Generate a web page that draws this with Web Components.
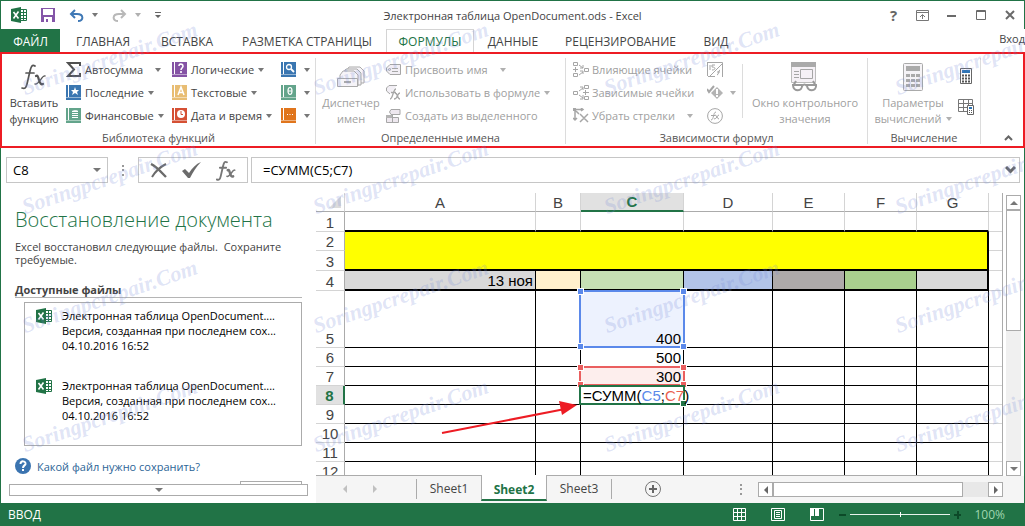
<!DOCTYPE html>
<html lang="ru">
<head>
<meta charset="utf-8">
<title>Электронная таблица OpenDocument.ods - Excel</title>
<style>
html, body { margin: 0; height: 100%; }
body { font-family: "Open Sans", "Noto Sans", sans-serif; font-size: 12px; color: #444; background: #fff; }
</style>
</head>
<body>
<xl-app></xl-app>
<script>
const base = `*,*::before,*::after{box-sizing:border-box}
button,input{font:inherit;color:inherit;background:none;border:0;padding:0;margin:0}
button{cursor:pointer;white-space:nowrap}`;

function define(name, css, html) {
  customElements.define(name, class extends HTMLElement {
    connectedCallback() {
      if (this.shadowRoot) return;
      const root = this.attachShadow({ mode: 'open' });
      const t = document.createElement('template');
      t.innerHTML = `<style>${base}${css}</style>` + (typeof html === 'function' ? html(this) : html);
      root.append(document.importNode(t.content, true));
    }
  });
}

const book = (c, inner) => `<path fill="${c}" d="M0 0h2v12H0zM3 0h12v12H3zM0 13h15v2H0z"/><path fill="${c}" opacity=".55" d="M0 12h15v1H0z"/>${inner}`;
const G = 'fill="none" stroke="#a6a6a6"';
const fx = (c, s) => `<g fill="none" stroke="${c}" stroke-linecap="round"><path stroke-width="${s}" d="M14 3c-3-2-4 1-5 5L6 21c-1 4-2 5-5 4M5 10h8"/><path stroke-width="${s * 1.3}" d="M15 13c2-1 2 1 3 4s2 5 4 4"/><path stroke-width="${s * .8}" d="M24 13c-3-1-6 9-10 8"/></g>`;
const icons = {
  excel: [16, 16, `<path fill="#fff" stroke="#217346" d="M8 2.500h7.500v11H8z"/><path stroke="#217346" d="M8 5.500h7M8 8.500h7M8 11.500h7M12.500 3v10"/><path fill="#217346" d="M0 2l10-2v16L0 14z"/><path stroke="#fff" stroke-width="1.600" d="M2.500 5l5 6.500M7.500 4.500l-5 7"/>`],
  save: [14, 14, `<path fill="#8455a8" fill-rule="evenodd" d="M0 0h14v14H0zM2 1v6h10V1zM3 9v5h8V9z"/><path fill="#8455a8" d="M5 11h2v3H5z"/>`],
  undo: [15, 13, `<path fill="none" stroke="#3f78b5" stroke-width="2" d="M6 1L2 5l4 4M2 5h6c7 0 7 7 1 7"/>`],
  redo: [15, 13, `<path fill="none" stroke="#b8b8b8" stroke-width="2" d="M9 1l4 4-4 4M13 5H7C0 5 0 12 6 12"/>`],
  down: [6, 4, `<path fill="#777" d="M0 0h6L3 4z"/>`],
  downg: [6, 4, `<path fill="#b0b0b0" d="M0 0h6L3 4z"/>`],
  custom: [6, 6, `<path fill="#666" d="M0 0h6v1H0zM0 3h6L3 6z"/>`],
  disp: [13, 11, `<path fill="none" stroke="#777" d="M.5.5h12v10H.5zM0 2.500h13M6.500 9V5M4 7l2.500-2.500L9 7"/>`],
  min: [10, 10, `<path fill="#6a6a6a" d="M0 5h9v2H0z"/>`],
  max: [10, 10, `<path fill="none" stroke="#6a6a6a" d="M.5.5h9v9h-9zM0 1.500h10"/>`],
  close: [10, 10, `<path fill="none" stroke="#6a6a6a" stroke-width="2" d="M1 1l8 8M9 1L1 9"/>`],
  fxbig: [26, 28, fx('#555', 1.7)],
  fxbar: [20, 21, `<g transform="scale(.78)">${fx('#777', 2.4)}</g>`],
  sigma: [15, 15, `<path fill="none" stroke="#505050" stroke-width="2" d="M14 4V1H2l6 6.500L2 14h12v-3"/>`],
  star: [15, 15, book('#3a76b1', `<path fill="#fff" d="M9 2l1 3h3l-2 2 1 3-3-2-3 2 1-3-2-2h3z"/>`)],
  money: [15, 15, book('#63a48b', `<path fill="#fff" d="M6 3c1-1 6-1 6 0v1H6zM6 5h6v1H6zM6 7h6v1H6zM6 9h6v1H6z"/>`)],
  logic: [15, 15, book('#8553a5', `<path fill="none" stroke="#fff" stroke-width="1.600" d="M7 4c0-3 4-2 4 0S9 6 9 8M9 9v2"/>`)],
  text: [15, 15, book('#e8bd73', `<path fill="none" stroke="#fff" stroke-width="1.500" d="M6 10l3-8 3 8M7 7.500h4"/>`)],
  clock: [15, 15, book('#d55034', `<circle cx="9" cy="6" r="4" fill="#fff"/><path fill="none" stroke="#d55034" d="M9 3v3.500h2"/>`)],
  look: [15, 15, book('#3a76b1', `<circle cx="8" cy="5" r="2.500" fill="none" stroke="#fff" stroke-width="1.300"/><path stroke="#fff" stroke-width="1.800" d="M10 7l3 3"/>`)],
  theta: [15, 15, book('#63a48b', `<ellipse cx="9" cy="6" rx="2" ry="3.500" fill="none" stroke="#fff" stroke-width="1.200"/><path stroke="#fff" d="M7 6h4"/>`)],
  more: [15, 15, book('#e0751c', `<path fill="#fff" d="M6 6h1v1H6zM8.500 6h1v1h-1zM11 6h1v1h-1z"/>`)],
  names: [28, 22, `<g fill="#f6f4f8" stroke="#aaa"><path d="M9 10V5l3-4h11l4 4v12H9z"/><path d="M6 12V7l3-4h11l4 4v12H6z"/><path d="M3 12V9l3-4h11l4 4v11H3z"/><path d="M.5 12.500h20v8H.5z"/></g><path fill="#aaa" d="M7 15h7v2H7z"/>`],
  tag: [15, 12, `<path fill="#f2eff5" stroke="#a6a6a6" d="M4 .5h10.500v10H4L.5 7V4z"/><path ${G} d="M6 4.500h6M6 7.500h6"/><circle cx="3.500" cy="5.500" r="1" ${G}/>`],
  tagfx: [15, 15, `<path fill="#f2eff5" stroke="#a6a6a6" d="M11 .5H3L.5 3v3L4 9"/><path ${G} stroke-width="1.300" d="M4 14c3 0 3-10 6-10M5 7.500h5M9 8c3 0 2 6 5 6M14 8c-3 0-2 6-6 6"/>`],
  create: [15, 14, `<path fill="#eee8ef" stroke="#a6a6a6" d="M5 .5h9v5H5L3.500 3zM.5 8.500h12v5H.5zM6.500 6v8"/><path fill="#b4b4b4" d="M0 6h6v3H0z"/>`],
  prec: [16, 16, `<path ${G} d="M.5.5h4v3h-4zM.5 11.500h4v3h-4zM11.500 6.500h4v3h-4zM0 7.500h5M2.500 5v5M6 3l4 3M10 3v3H7M6 13l4-3M7 9h3v3"/>`],
  dep: [16, 16, `<path ${G} d="M.5 6.500h4v3h-4zM11.500.5h4v3h-4zM11.500 11.500h4v3h-4zM10 7.500h6M12.500 5v5M6 6l4-3M7 2h3v3M6 10l4 3M10 10v4H7"/>`],
  remove: [16, 15, `<path fill="#a6a6a6" d="M0 0h3v3H0z"/><path ${G} stroke-width="1.500" d="M2 1.500h8M8 0l2 1.500L8 3M2 3v9M0 10l2 2 2-2M3 3l3 3M7 6l8 8M15 6l-8 8"/>`],
  show: [16, 16, `<path ${G} d="M0 .5h15.500V15M.5 1v13M1 14.500h7M3 14L15 2M3 3v5M8 3H5v2c4 0 4 3 0 3M13 8c-2 0-1 5-3 5M10 10h3"/>`],
  err: [16, 15, `<path fill="#b4b4b4" d="M10 2l6 6-6 6-6-6z"/><path fill="#fff" d="M9 4h2v5H9zM9 10h2v2H9z"/><path ${G} stroke-width="2" d="M0 4l2 3 5-6"/>`],
  eval: [16, 16, `<circle cx="8" cy="8" r="7.400" ${G}/><path ${G} d="M4 12c3 0 2-8 5-8M4 7.500h4M8 7c2 0 2 4 4 4M12 7c-2 0-2 4-5 4"/>`],
  watch: [28, 30, `<path fill="#f5f1f6" stroke="#bcbcbc" d="M.5.5h24v20H.5z"/><path fill="#aaa" d="M0 0h25v5H0z"/><path ${G} d="M3 9.500h5M3 12.500h5M3 15.500h5M9.500 7.500h12v9h-12z"/><path fill="#fff" stroke="#999" stroke-width="2" d="M2 23h9c1 7-9 7-9 0zM16 23h9c1 7-9 7-9 0z"/><path fill="none" stroke="#999" stroke-width="2" d="M11 24c2-2 3-2 5 0M2 24l3-5M25 24l-3-5"/>`],
  calc: [20, 28, `<rect x=".5" y=".5" width="19" height="27" rx="1" fill="#f5f3f6" stroke="#aaa"/><path fill="#aaa" d="M3 3h14v5H3z"/><path stroke="#aaa" stroke-width="3" stroke-dasharray="4 1" d="M3 12.500h14M3 17.500h14M3 22.500h14"/>`],
  calcnow: [12, 16, `<path fill="#fff" stroke="#666" d="M.5.5h11v15H.5z"/><path fill="#2f75b5" d="M2 2h8v3H2z"/><path stroke="#555" stroke-width="2" stroke-dasharray="2 1" d="M2 7.500h8M2 10.500h8M2 13.500h8"/>`],
  calcsheet: [16, 16, `<path fill="none" stroke="#777" d="M.5.5h14v12H.5zM0 4.500h15M0 8.500h15M5.500 0v13M10.500 0v13"/><path fill="#fff" stroke="#666" d="M9.500 6.500h6v9h-6z"/><path fill="#2f75b5" d="M11 8h3v2h-3z"/><path stroke="#555" stroke-dasharray="1 1" d="M11 11.500h3M11 13.500h3"/>`],
  up: [9, 6, `<path fill="none" stroke="#666" stroke-width="2" d="M1 5l3.500-3.500L8 5"/>`],
  chev: [11, 8, `<path fill="none" stroke="#666" stroke-width="3" d="M1 1l4.500 4.500L10 1"/>`],
  x: [17, 15, `<path fill="none" stroke="#6b6b6b" stroke-width="2.400" d="M1 1c6 3 10 8 15 13"/><path fill="none" stroke="#6b6b6b" stroke-width="2" d="M16 1C10 4 5 9 2 14"/>`],
  check: [19, 16, `<path fill="#6b6b6b" d="M0 9l3-2 4 4C10 6 14 2 19 0 14 5 11 10 8 16H6z"/>`],
  dots: [2, 11, `<path fill="#999" d="M0 0h2v2H0zM0 4h2v2H0zM0 9h2v2H0z"/>`],
  help: [16, 16, `<circle cx="8" cy="8" r="8" fill="#3b74b0"/><path fill="none" stroke="#fff" stroke-width="2" d="M5.500 6c0-4 5.500-3 5 0-.3 1.500-2.500 1.500-2.500 4M8 11v2"/>`],
  left: [4, 8, `<path fill="currentColor" d="M4 0v8L0 4z"/>`],
  right: [4, 8, `<path fill="currentColor" d="M0 0v8l4-4z"/>`],
  tup: [8, 4, `<path fill="#777" d="M0 4h8L4 0z"/>`],
  tdown: [8, 4, `<path fill="#777" d="M0 0h8L4 4z"/>`],
  add: [16, 16, `<circle cx="8" cy="8" r="7.500" fill="none" stroke="#777"/><path stroke="#666" stroke-width="2" d="M4 8h8M8 4v8"/>`],
  corner: [12, 12, `<path fill="#dcdcdc" d="M12 0v12H0z"/>`],
  normal: [13, 13, `<path fill="none" stroke="#fff" d="M.5.5h12v12H.5zM0 4.500h13M0 8.500h13M4.500 0v13M8.500 0v13"/>`],
  layout: [14, 13, `<path fill="none" stroke="#fff" d="M.5.5h13v12H.5zM3.500 2.500h7v8h-7zM5 4.500h4M5 6.500h4M5 8.500h4"/>`],
  breaks: [14, 13, `<path fill="none" stroke="#fff" d="M.5.5h13v12H.5z"/><path fill="#fff" d="M0 0h4v8H0zM5 0h4v8H5z"/>`]
};

define('xl-icon', ':host{display:inline-block;flex:none;line-height:0}svg{display:block}', el => {
  const [w, h, body] = icons[el.getAttribute('name')];
  return `<svg width="${w}" height="${h}" viewBox="0 0 ${w} ${h}" aria-hidden="true">${body}</svg>`;
});

define('xl-titlebar', `
:host{display:grid;grid-template-columns:1fr auto 1fr;align-items:center;height:28px;font-size:11px}
.q{display:flex;align-items:center;padding-left:10px}
.q button{display:flex;align-items:center;gap:8px;margin-left:14px}
.w{display:flex;justify-content:flex-end}
.w button{width:29px;height:20px;display:flex;align-items:center;justify-content:center;font-size:15px;font-weight:700;color:#666}`, `
<div class="q"><xl-icon name="excel"></xl-icon>
<button aria-label="Сохранить"><xl-icon name="save"></xl-icon></button>
<button aria-label="Отменить"><xl-icon name="undo"></xl-icon><xl-icon name="down"></xl-icon></button>
<button aria-label="Вернуть"><xl-icon name="redo"></xl-icon><xl-icon name="downg"></xl-icon></button>
<button aria-label="Настройка панели"><xl-icon name="custom"></xl-icon></button></div>
<div>Электронная таблица OpenDocument.ods - Excel</div>
<div class="w"><button>?</button><button aria-label="Лента"><xl-icon name="disp"></xl-icon></button><button aria-label="Свернуть"><xl-icon name="min"></xl-icon></button><button aria-label="Развернуть"><xl-icon name="max"></xl-icon></button><button aria-label="Закрыть"><xl-icon name="close"></xl-icon></button></div>`);

define('xl-tabs', `
:host{display:flex;height:23px;justify-content:space-between;overflow:hidden;border-left:1px solid #217346}
nav{display:grid;grid-template-columns:59px 86px 82px 158px 88px 78px 137px 54px}
button{text-align:center;line-height:24px}
.file{background:#217346;color:#fff}
.on{color:#217346;border:1px solid #d4d4d4;border-bottom:0}
.in{line-height:20px;align-self:start;font-size:11px}`, `
<nav><button class="file">ФАЙЛ</button><button>ГЛАВНАЯ</button><button>ВСТАВКА</button><button>РАЗМЕТКА СТРАНИЦЫ</button><button class="on">ФОРМУЛЫ</button><button>ДАННЫЕ</button><button>РЕЦЕНЗИРОВАНИЕ</button><button>ВИД</button></nav>
<button class="in">Вход</button>`);

define('xl-group', `
:host{display:flex;flex-direction:column;flex:none;border-right:1px solid #dcdcdc;height:86px}
.c{display:flex;flex:1}
.l{text-align:center;line-height:12px;height:12px;color:#555}`, el => `
<div class="c"><slot></slot></div><div class="l">${el.getAttribute('label')}</div>`);

define('xl-big', `
:host{display:block;flex:none}
:host([off]){color:#a0a0a0}
button{display:flex;flex-direction:column;align-items:center;width:100%;line-height:16px}
.i{height:37px;display:flex;align-items:center}
.r{display:flex;align-items:center;gap:4px}`, el => `
<button><span class="i"><xl-icon name="${el.getAttribute('icon')}"></xl-icon></span><span>${el.getAttribute('top')}</span><span class="r">${el.getAttribute('bottom')}${el.hasAttribute('menu') ? '<xl-icon name="downg"></xl-icon>' : ''}</span></button>`);

define('xl-cmd', `
:host{display:block}
:host([off]){color:#a0a0a0}
button{display:flex;align-items:center;height:23px}
.i{width:15px;display:flex;justify-content:center;margin-right:4px}
.d{margin-left:4px}
.far{margin-left:12px}`, el => `
<button ${el.hasAttribute('label') ? '' : 'aria-label="Команда"'}><span class="i"><xl-icon name="${el.getAttribute('icon')}"></xl-icon></span>${el.getAttribute('label') || ''}${el.hasAttribute('menu') ? `<xl-icon class="${el.getAttribute('menu') === 'far' ? 'far' : 'd'}" name="${el.hasAttribute('off') ? 'downg' : 'down'}"></xl-icon>` : ''}</button>`);

define('xl-ribbon', `
:host{display:flex;border:2px solid #ed1c24;height:96px;padding-top:4px;font-size:11px}
xl-group:nth-of-type(1){width:314px}
xl-group:nth-of-type(2){width:250px}
xl-group:nth-of-type(3){width:302px}
xl-group:nth-of-type(4){width:113px}
.a{width:64px}.b{width:106px}.n{width:109px}
.m{width:70px}.t{width:134px}.w{width:124px}.p{width:90px}
.sep{width:1px;height:54px;margin:6px 0 0 6px;background:#dcdcdc}
.pad{padding-left:7px}
.calc{padding-top:6px;display:flex;flex-direction:column;gap:8px}
.up{margin:auto 0 0 auto;width:30px;height:16px;display:flex;justify-content:center;align-items:center}`, `
<xl-group label="Библиотека функций">
<xl-big class="a" icon="fxbig" top="Вставить" bottom="функцию"></xl-big>
<div class="b"><xl-cmd icon="sigma" label="Автосумма" menu="far"></xl-cmd><xl-cmd icon="star" label="Последние" menu></xl-cmd><xl-cmd icon="money" label="Финансовые" menu></xl-cmd></div>
<div class="n"><xl-cmd icon="logic" label="Логические" menu></xl-cmd><xl-cmd icon="text" label="Текстовые" menu></xl-cmd><xl-cmd icon="clock" label="Дата и время" menu></xl-cmd></div>
<div><xl-cmd icon="look" menu></xl-cmd><xl-cmd icon="theta" menu></xl-cmd><xl-cmd icon="more" menu></xl-cmd></div>
</xl-group>
<xl-group label="Определенные имена">
<xl-big class="m" off icon="names" top="Диспетчер" bottom="имен"></xl-big>
<div><xl-cmd off icon="tag" label="Присвоить имя" menu="far"></xl-cmd><xl-cmd off icon="tagfx" label="Использовать в формуле" menu></xl-cmd><xl-cmd off icon="create" label="Создать из выделенного"></xl-cmd></div>
</xl-group>
<xl-group label="Зависимости формул">
<div class="pad t"><xl-cmd off icon="prec" label="Влияющие ячейки"></xl-cmd><xl-cmd off icon="dep" label="Зависимые ячейки"></xl-cmd><xl-cmd off icon="remove" label="Убрать стрелки" menu="far"></xl-cmd></div>
<div class="pad"><xl-cmd off icon="show"></xl-cmd><xl-cmd off icon="err" menu></xl-cmd><xl-cmd off icon="eval"></xl-cmd></div>
<div class="sep"></div>
<xl-big class="w" off icon="watch" top="Окно контрольного" bottom="значения"></xl-big>
</xl-group>
<xl-group label="Вычисление">
<xl-big class="p" off icon="calc" top="Параметры" bottom="вычислений" menu></xl-big>
<div class="calc"><xl-cmd icon="calcnow"></xl-cmd><xl-cmd icon="calcsheet"></xl-cmd></div>
</xl-group>
<button class="up" aria-label="Свернуть ленту"><xl-icon name="up"></xl-icon></button>`);

define('xl-formula-bar', `
:host{display:flex;align-items:center;padding:9px 4px 10px 5px;height:45px;color:#000;font-size:13px}
.box{border:1px solid #c6c6c6;height:26px;display:flex;align-items:center}
.name{width:102px;padding:0 6px}
.name input{width:70px;flex:1}
.dots{margin:0 14px}
.act{width:110px;justify-content:space-around;margin-right:3px;padding:0 4px}
.f{flex:1;padding:0 3px 0 11px}
.f input{flex:1}
.act button{display:flex}`, `
<div class="box name"><input aria-label="Имя" value="C8"><xl-icon name="tdown"></xl-icon></div>
<xl-icon class="dots" name="dots"></xl-icon>
<div class="box act"><button aria-label="Отмена"><xl-icon name="x"></xl-icon></button><button aria-label="Ввод"><xl-icon name="check"></xl-icon></button><button aria-label="Вставить функцию"><xl-icon name="fxbar"></xl-icon></button></div>
<div class="box f"><input aria-label="Строка формул" value="=СУММ(C5;C7)"><xl-icon name="chev"></xl-icon></div>`);

define('xl-file', `
:host{display:flex;gap:10px;height:70px;color:#000;line-height:15px;font-size:11px}
div{min-width:0;white-space:nowrap}`, `
<xl-icon name="excel"></xl-icon><div><slot></slot></div>`);

define('xl-recovery', `
:host{display:flex;flex-direction:column;width:315px;flex:none;overflow:hidden;padding:12px 8px 7px}
.in{flex:1;min-height:0;overflow:hidden;padding:0 6px}
h1{margin:0;font-weight:300;font-size:20px;line-height:30px;color:#217346;white-space:nowrap}
p{margin:5px 0 0;font-size:11px;line-height:13px}
h2{margin:17px 0 0;font-size:11px;line-height:14px;border-bottom:1px solid #b5b5b5}
.list{margin:4px 0 0 9px;border:1px solid #ababab;height:144px;padding:5px 0 0 11px}
.help{display:flex;align-items:center;gap:6px;margin-top:12px;color:#2b6496;font-size:11px;text-decoration:none}
.close{display:block;width:62px;height:24px;border:1px solid #ababab;margin:7px 0 0 auto}
.more{height:12px;border:1px solid #ababab;display:flex;align-items:center;justify-content:center;flex:none}`, `
<div class="in"><h1>Восстановление документа</h1>
<p>Excel восстановил следующие файлы.&nbsp; Сохраните<br>требуемые.</p>
<h2>Доступные файлы</h2>
<div class="list">
<xl-file>Электронная таблица OpenDocument....<br>Версия, созданная при последнем сох...<br>04.10.2016 16:52</xl-file>
<xl-file>Электронная таблица OpenDocument....<br>Версия, созданная при последнем сох...<br>04.10.2016 16:52</xl-file></div>
<a class="help" href="#help"><xl-icon name="help"></xl-icon>Какой файл нужно сохранить?</a>
<button class="close" aria-label="Закрыть"></button></div>
<button class="more" aria-label="Далее"><xl-icon name="tdown"></xl-icon></button>`);

const blankRow = n => `<tr><th scope="row">${n}</th>${'<td></td>'.repeat(7)}<td class="z"></td></tr>`;
define('xl-grid', `
:host{display:block;flex:1;min-height:0;overflow:hidden;position:relative;border-right:1px solid #ababab;border-bottom:1px solid #ababab;font:15px "Liberation Sans",Arial,sans-serif;color:#000}
table{border-collapse:separate;border-spacing:0;table-layout:fixed;width:687px}
th{font-weight:400;color:#444}
td,th{padding:0 2px 0 0;line-height:17px;height:19px;vertical-align:bottom;white-space:nowrap}
thead th{height:19px;border-right:1px solid #d4d4d4;border-bottom:1px solid #ababab;padding:0}
tbody th{border-right:1px solid #ababab;border-bottom:1px solid #d4d4d4;padding:0}
td{border-right:1px solid #000;border-bottom:1px solid #000;text-align:right}
.z{border-right:0;border-bottom-color:#d4d4d4}
.s20 td,.s20 th{height:20px}
.first td{border-right-color:#d4d4d4;border-bottom:2px solid #000}
.first .z,.head .z{border-bottom:1px solid #d4d4d4;border-right:0}
.title{background:#ff0;border-right:2px solid #000;border-bottom:2px solid #000}
.head td{border-bottom:2px solid #000}
.tall td,.tall th{height:57px}
thead .on{background:#e1e1e1;color:#217346;font-weight:700;border-bottom:2px solid #217346}
tbody .on{background:#e1e1e1;color:#217346;font-weight:700;border-right:2px solid #217346}
.sel{position:relative}
.ring{position:absolute;inset:-1px -2px -1px -2px;border:2px solid var(--c);background:var(--bg)}
.ring i{position:absolute;width:7px;height:7px;background:var(--c);border:1px solid #fff}
.ring i:nth-child(1){left:-4px;top:-4px}.ring i:nth-child(2){right:-4px;top:-4px}
.ring i:nth-child(3){left:-4px;bottom:-4px}.ring i:nth-child(4){right:-4px;bottom:-4px}
.sel span{position:relative}
.edit{text-align:left;padding-left:2px}
.edit .ring i{left:auto;top:auto;right:-4px;bottom:-4px}
.edit b{font-weight:400}
.arrow{position:absolute;left:125px;top:204px}
thead th:first-child{text-align:right;padding-right:3px}`, `
<table><colgroup><col style="width:29px"><col style="width:191px"><col style="width:45px"><col style="width:103px"><col style="width:89px"><col style="width:72px"><col style="width:72px"><col style="width:72px"><col style="width:14px"></colgroup>
<thead><tr><th aria-label="Выделить все"><xl-icon name="corner"></xl-icon></th><th>A</th><th>B</th><th class="on">C</th><th>D</th><th>E</th><th>F</th><th>G</th><th class="z" style="border-right:0"></th></tr></thead>
<tbody>
<tr class="s20 first"><th>1</th>${'<td></td>'.repeat(7)}<td class="z"></td></tr>
<tr><th>2</th><td class="title" colspan="7" rowspan="2"></td><td class="z"></td></tr>
<tr class="s20"><th>3</th><td class="z"></td></tr>
<tr class="s20 head"><th>4</th><td style="background:#d9d9d9">13 ноя</td><td style="background:#fff0cd"></td><td style="background:#c6e0b4"></td><td style="background:#b2c4e8"></td><td style="background:#aeaaaa"></td><td style="background:#a9d08e"></td><td style="background:#d9d9d9;border-right:2px solid #000"></td><td class="z"></td></tr>
<tr class="tall"><th>5</th><td></td><td></td><td class="sel" style="--c:#5b89ea;--bg:#edf2fe"><div class="ring"><i></i><i></i><i></i><i></i></div><span>400</span></td>${'<td></td>'.repeat(4)}<td class="z"></td></tr>
<tr><th>6</th><td></td><td></td><td>500</td>${'<td></td>'.repeat(4)}<td class="z"></td></tr>
<tr><th>7</th><td></td><td></td><td class="sel" style="--c:#ea5f5f;--bg:#fdeeed"><div class="ring"><i></i><i></i><i></i><i></i></div><span>300</span></td>${'<td></td>'.repeat(4)}<td class="z"></td></tr>
<tr><th class="on">8</th><td></td><td></td><td class="sel edit" style="--c:#217346;--bg:#fff"><div class="ring"><i></i></div><span>=СУММ(<b style="color:#5b89ea">C5</b>;<b style="color:#ea5f4f">C7</b>)</span></td>${'<td></td>'.repeat(4)}<td class="z"></td></tr>
${[9, 10, 11, 12].map(blankRow).join('')}
</tbody></table>
<svg class="arrow" width="140" height="40" aria-hidden="true"><path stroke="#ed1c24" stroke-width="2" d="M1 36L124 12"/><path fill="#ed1c24" d="M136 8L118 4l3 14z"/></svg>`);

define('xl-vscroll', `
:host{display:flex;flex-direction:column;width:15px;margin:2px 3px 0;background:#f0f0f0}
button{height:15px;border:1px solid #ababab;background:#fff;display:flex;align-items:center;justify-content:center;flex:none}
.thumb{height:121px}
.dn{margin-top:auto}`, `
<button aria-label="Вверх"><xl-icon name="tup"></xl-icon></button><button class="thumb" aria-label="Ползунок"></button><button class="dn" aria-label="Вниз"><xl-icon name="tdown"></xl-icon></button>`);

define('xl-sheet-tabs', `
:host{display:flex;background:#f5f5f5;height:27px;padding-right:21px;align-items:flex-start}
.nav{width:100px;height:26px;display:flex;align-items:center;justify-content:center;gap:26px;color:#c0c0c0;padding-right:12px;flex:none}
.tab{width:64px;height:25px;line-height:24px;flex:none}
.line{width:1px;height:20px;background:#ababab;margin-top:3px}
.on{width:66px;background:#fff;color:#217346;font-weight:700;border-bottom:2px solid #217346;border-left:1px solid #ababab;border-right:1px solid #ababab;margin-top:-1px;padding-top:3px;height:26px;position:relative}
.add{margin:5px auto 0 33px}
.dots{margin:8px 16px 0 0}
.bar{width:245px;height:15px;margin-top:6px;display:flex;background:#e8e8e8;color:#666}
.bar button{width:15px;border:1px solid #ababab;background:#fff;display:flex;align-items:center;justify-content:center}
.bar .thumb{width:190px;margin-right:auto}`, `
<div class="nav"><xl-icon name="left"></xl-icon><xl-icon name="right"></xl-icon></div>
<div class="line"></div><button class="tab">Sheet1</button><button class="tab on">Sheet2</button><button class="tab">Sheet3</button><div class="line"></div>
<button class="add" aria-label="Новый лист"><xl-icon name="add"></xl-icon></button>
<xl-icon class="dots" name="dots"></xl-icon>
<div class="bar"><button aria-label="Влево"><xl-icon name="left"></xl-icon></button><button class="thumb" aria-label="Ползунок"></button><button aria-label="Вправо"><xl-icon name="right"></xl-icon></button></div>`);

define('xl-status', `
:host{display:flex;align-items:center;height:23px;background:#217346;color:#fff;padding:0 20px 0 8px}
.v{margin-left:auto;display:flex;gap:25px;margin-right:15px}
.v button{display:flex}
.z{width:7px;height:2px;background:#0c4a28;position:relative}
.plus::after{content:"";position:absolute;left:3px;top:-3px;width:2px;height:8px;background:#0c4a28}
input{appearance:none;width:100px;height:12px;margin:0 4px;background:linear-gradient(#e9f3ec,#e9f3ec) center/100% 1px no-repeat}
input::-webkit-slider-thumb{appearance:none;width:1px;height:5px;background:#fff}
.pc{margin-left:13px;color:#9fd5ae}`, `
<span>ВВОД</span>
<div class="v"><button aria-label="Обычный"><xl-icon name="normal"></xl-icon></button><button aria-label="Разметка страницы"><xl-icon name="layout"></xl-icon></button><button aria-label="Страничный"><xl-icon name="breaks"></xl-icon></button></div>
<button class="z" aria-label="Уменьшить"></button><input type="range" aria-label="Масштаб" min="0" max="200" value="100"><button class="z plus" aria-label="Увеличить"></button>
<span class="pc">100%</span>`);

define('xl-watermark', `
:host{position:absolute;inset:0;overflow:hidden;pointer-events:none;display:grid;grid-template-columns:repeat(4,291px);grid-auto-rows:119px;padding-left:27px;font:italic 700 22px/26px "Liberation Serif",serif;color:rgba(120,140,215,.24)}
span{display:block;align-self:start;margin-top:75px;height:26px;white-space:nowrap;transform-origin:0 100%;transform:rotate(-19deg)}`,
  '<span aria-hidden="true">Soringpcrepair.Com</span>'.repeat(16));

define('xl-app', `
:host{display:flex;flex-direction:column;height:100vh;position:relative;overflow:hidden}
.win{display:flex;flex-direction:column;flex:1;min-height:0;border-top:1px solid #217346}
.side{border:solid #217346;border-width:0 1px}
.main{display:flex;flex:1;min-height:0}
.work{flex:1;min-width:0;display:flex;flex-direction:column}
.sheet{flex:1;min-height:0;display:flex}`, `
<div class="win">
<xl-titlebar class="side"></xl-titlebar><xl-tabs></xl-tabs><xl-ribbon></xl-ribbon>
<xl-formula-bar class="side"></xl-formula-bar>
<div class="main side"><xl-recovery></xl-recovery>
<div class="work"><div class="sheet"><xl-grid></xl-grid><xl-vscroll></xl-vscroll></div><xl-sheet-tabs></xl-sheet-tabs></div></div>
<xl-status></xl-status></div>
<xl-watermark></xl-watermark>`);
</script>
</body>
</html>
